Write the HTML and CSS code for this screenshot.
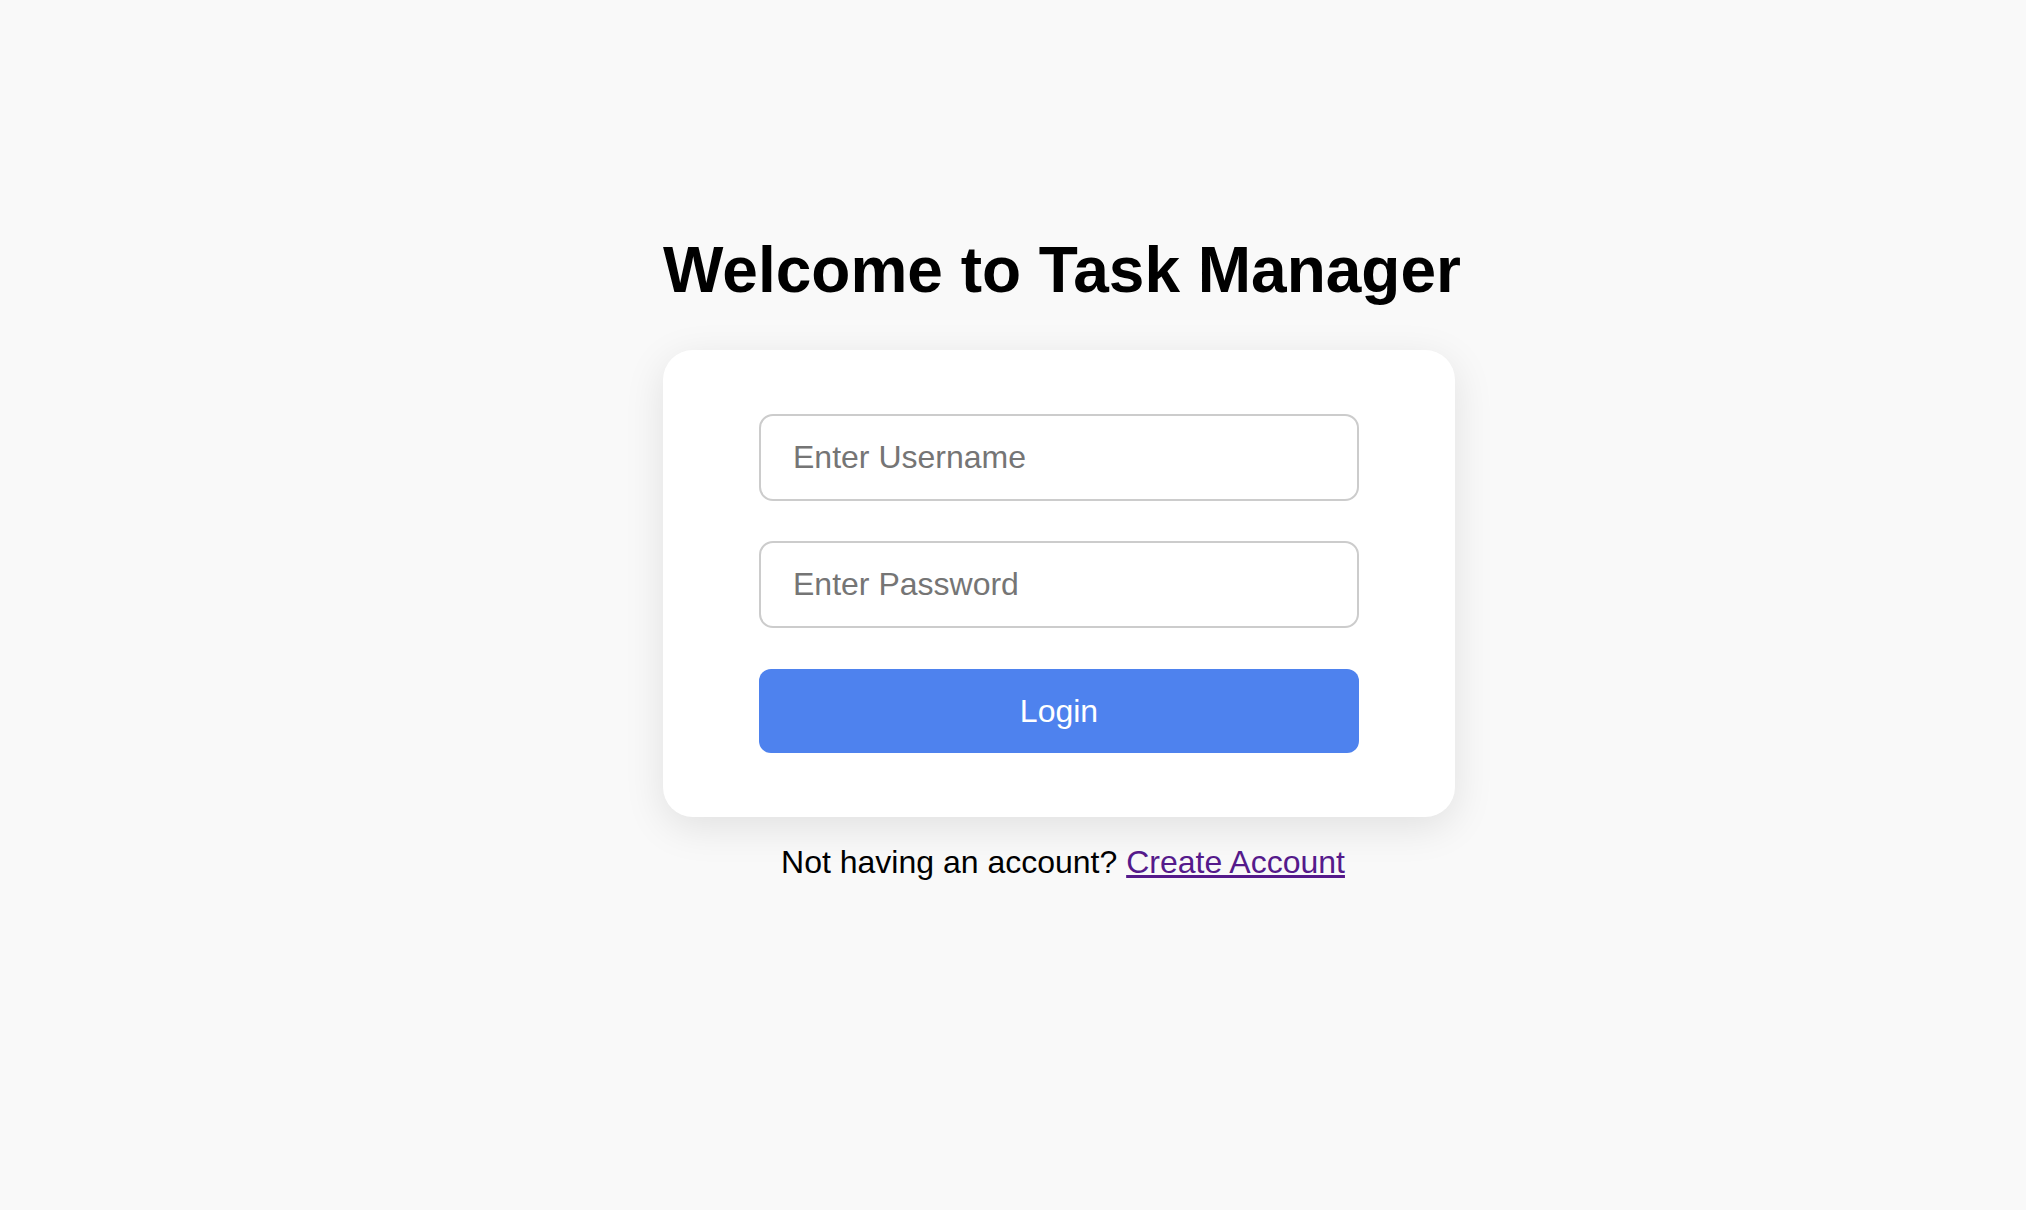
FILE: index.html
```html
<!DOCTYPE html>
<html lang="en">
<head>
<meta charset="utf-8">
<title>Task Manager</title>
<link rel="stylesheet" href="styles.css">
</head>
<body>
<main class="page">
  <h1 class="title">Welcome to Task Manager</h1>
  <form class="card">
    <input class="field" type="text" placeholder="Enter Username">
    <input class="field" type="password" placeholder="Enter Password">
    <button class="btn" type="button">Login</button>
  </form>
  <p class="signup">Not having an account? <a class="link" href="#">Create Account</a></p>
</main>
</body>
</html>
```
FILE: styles.css
```css
html, body {
  margin: 0;
  padding: 0;
  background: #f9f9f9;
}
body {
  font-family: "Liberation Sans", Arial, Helvetica, sans-serif;
  color: #000;
}
.page {
  display: flex;
  flex-direction: column;
  align-items: center;
  padding-top: 233px;
  padding-left: 92px;
  box-sizing: border-box;
  min-height: 1210px;
}
.title {
  margin: 0 0 43px 0;
  padding-left: 6px;
  font-size: 64px;
  line-height: 74px;
  font-weight: 700;
}
.card {
  width: 792px;
  box-sizing: border-box;
  background: #fff;
  border-radius: 30px;
  padding: 64px 96px;
  box-shadow: 0 10px 40px rgba(0, 0, 0, 0.1);
  display: flex;
  flex-direction: column;
  gap: 40px;
}
.field {
  display: block;
  width: 100%;
  height: 87px;
  box-sizing: border-box;
  border: 2px solid #cccccc;
  border-radius: 14px;
  padding: 0 32px;
  font-family: "Liberation Sans", Arial, Helvetica, sans-serif;
  font-size: 32px;
  color: #000;
  background: #fff;
  outline: none;
}
.field::placeholder {
  color: #757575;
}
.btn {
  display: block;
  width: 100%;
  height: 84px;
  margin-top: 1px;
  border: none;
  border-radius: 12px;
  background: #4e82ee;
  color: #fff;
  font-family: "Liberation Sans", Arial, Helvetica, sans-serif;
  font-size: 32px;
  cursor: pointer;
}
.signup {
  margin: 27px 0 0 0;
  padding-left: 8px;
  font-size: 32px;
  line-height: 37px;
}
.link {
  color: #551a8b;
  text-decoration: underline;
}
```
